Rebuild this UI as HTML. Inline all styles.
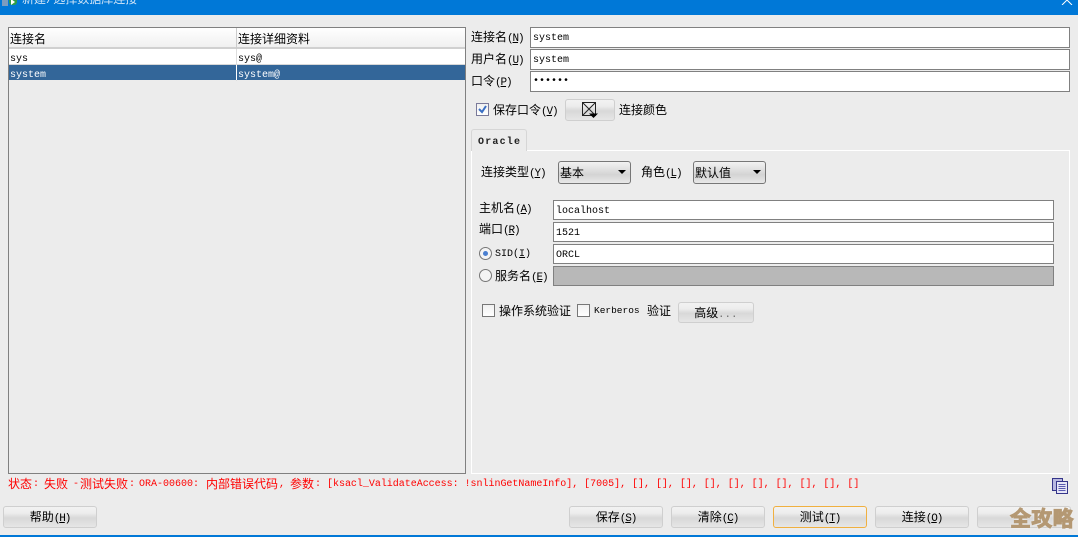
<!DOCTYPE html>
<html>
<head>
<meta charset="utf-8">
<style>
html,body{margin:0;padding:0;}
body{width:1078px;height:537px;overflow:hidden;background:#ececec;position:relative;font-family:"Liberation Mono","WenQuanYi Zen Hei","Noto Sans CJK SC",monospace;color:#000;}
div{position:absolute;box-sizing:border-box;}
.t{font-size:12px;line-height:14px;white-space:nowrap;}
.m{font-size:10px;line-height:14px;white-space:nowrap;}
.f{background:#fff;border:1px solid #808080;border-top-width:1.5px;font-size:10px;line-height:22px;padding-left:2px;white-space:nowrap;}
.b{background:linear-gradient(#f2f2f2 0%,#ededed 30%,#d8d8d8 55%,#e6e6e6 100%);border:1px solid #cfcfcf;border-radius:3px;font-size:12px;line-height:22px;text-align:center;white-space:nowrap;}
.c{background:linear-gradient(#f0f0f0,#fff);border:1px solid #777;width:13px;height:13px;}
.p{font-size:11px;letter-spacing:-1.100px;}
.u{text-decoration:underline;}
.s{background:linear-gradient(#f2f2f2,#d4d4d4 60%,#e8e8e8);border:1px solid #777;border-radius:3px;font-size:12px;line-height:24px;padding-left:1px;white-space:nowrap;}
.s:after{content:"";position:absolute;right:4px;top:8px;border:4.500px solid transparent;border-top:4.500px solid #000;}
.r{border:1px solid #777;border-radius:50%;width:13px;height:13px;background:#f4f4f4;}
.e{color:#f00;top:478px;}
</style>
</head>
<body>
<div style="left:0;top:0;width:1078px;height:15px;background:#0078d7;"></div>
<div style="left:2px;top:-3px;width:6px;height:9px;background:#7a9cc0;"></div>
<div style="left:9px;top:-3px;width:8px;height:8px;background:#2f9e44;border-radius:0 0 3px 3px;"></div>
<div style="left:11px;top:-1px;width:0;height:0;border-left:4px solid #fff;border-top:3px solid transparent;border-bottom:3px solid transparent;"></div>
<div class="t" style="left:22px;top:-7px;color:#cfe4f7;">新建/选择数据库连接</div>
<svg style="position:absolute;left:1061px;top:0" width="12" height="5"><path d="M1 5L6 0L11 5" stroke="#fff" stroke-width="1" fill="none"/></svg>

<!-- table -->
<div style="left:8px;top:27px;width:458px;height:447px;border:1px solid #808080;background:#ececec;"></div>
<div style="left:9px;top:28px;width:456px;height:21px;background:linear-gradient(#fff,#f0f0f0);border-bottom:2px solid #d0d0d0;"></div>
<div style="left:236px;top:28px;width:1px;height:21px;background:#ccc;"></div>
<div class="t" style="left:10px;top:33px;">连接名</div>
<div class="t" style="left:238px;top:33px;">连接详细资料</div>
<div style="left:9px;top:49px;width:456px;height:16px;background:#fff;border-bottom:1px solid #d8d8d8;"></div>
<div style="left:236px;top:49px;width:1px;height:32px;background:#ddd;"></div>
<div class="m" style="left:10px;top:53px;">sys</div>
<div class="m" style="left:238px;top:53px;">sys@</div>
<div style="left:9px;top:65px;width:456px;height:15px;background:#336699;"></div>
<div style="left:236px;top:65px;width:1px;height:15px;background:#fff;"></div>
<div class="m" style="left:10px;top:69px;color:#fff;">system</div>
<div class="m" style="left:238px;top:69px;color:#fff;">system@</div>

<!-- top fields -->
<div class="t" style="left:471px;top:31px;">连接名<span class="p">(<span class="u">N</span>)</span></div>
<div class="t" style="left:471px;top:53px;">用户名<span class="p">(<span class="u">U</span>)</span></div>
<div class="t" style="left:471px;top:75px;">口令<span class="p">(<span class="u">P</span>)</span></div>
<div class="f" style="left:530px;top:27px;width:540px;height:21px;">system</div>
<div class="f" style="left:530px;top:49px;width:540px;height:21px;">system</div>
<div class="f" style="left:530px;top:71px;width:540px;height:21px;line-height:20px;">••••••</div>

<div class="c" style="left:476px;top:103px;border-color:#7a7a9a;"></div>
<svg style="position:absolute;left:476px;top:103px" width="13" height="13"><path d="M3 6L6 9L10 3" stroke="#3a6fc4" stroke-width="2" fill="none"/></svg>
<div class="t" style="left:493px;top:104px;">保存口令<span class="p">(<span class="u">V</span>)</span></div>
<div class="b" style="left:565px;top:99px;width:50px;height:22px;"></div>
<svg style="position:absolute;left:581px;top:101px" width="20" height="20"><path d="M1.500 1.500H14.500V14.500H1.500ZM1.500 1.500L14.500 14.500M14.500 1.500L1.500 14.500" stroke="#222" fill="none"/><path d="M8 12.500H17L12.500 17Z" fill="#000"/></svg>
<div class="t" style="left:619px;top:104px;">连接颜色</div>

<!-- tab -->
<div style="left:471px;top:150px;width:599px;height:324px;border:1px solid #fff;"></div>
<div style="left:471px;top:129px;width:56px;height:22px;background:#ececec;border:1px solid #d6d6d6;border-bottom:none;border-radius:3px 3px 0 0;"></div>
<div class="m" style="left:478px;top:136px;font-weight:bold;color:#222;letter-spacing:1.200px;">Oracle</div>

<div class="t" style="left:481px;top:166px;">连接类型<span class="p">(<span class="u">Y</span>)</span></div>
<div class="s" style="left:558px;top:161px;width:73px;height:23px;">基本</div>
<div class="t" style="left:641px;top:166px;">角色<span class="p">(<span class="u">L</span>)</span></div>
<div class="s" style="left:693px;top:161px;width:73px;height:23px;">默认值</div>

<div class="t" style="left:479px;top:202px;">主机名<span class="p">(<span class="u">A</span>)</span></div>
<div class="t" style="left:479px;top:223px;">端口<span class="p">(<span class="u">R</span>)</span></div>
<div class="f" style="left:553px;top:200px;width:501px;height:20px;">localhost</div>
<div class="f" style="left:553px;top:222px;width:501px;height:20px;">1521</div>
<div class="f" style="left:553px;top:244px;width:501px;height:20px;">ORCL</div>
<div class="f" style="left:553px;top:266px;width:501px;height:20px;background:#b8b8b8;"></div>
<div class="r" style="left:479px;top:247px;"></div>
<div style="left:483px;top:251px;width:5px;height:5px;border-radius:50%;background:#4a7fd0;"></div>
<div class="m" style="left:495px;top:248px;">SID(<span class="u">I</span>)</div>
<div class="r" style="left:479px;top:269px;"></div>
<div class="t" style="left:495px;top:270px;">服务名<span class="p">(<span class="u">E</span>)</span></div>

<div class="c" style="left:482px;top:304px;"></div>
<div class="t" style="left:499px;top:305px;">操作系统验证</div>
<div class="c" style="left:577px;top:304px;"></div>
<div class="m" style="left:594px;top:304px;font-size:9.500px;">Kerberos</div>
<div class="t" style="left:647px;top:305px;">验证</div>
<div class="b" style="left:678px;top:302px;width:76px;height:21px;">高级<span style="color:#666;font-size:10px;letter-spacing:.5px">...</span></div>

<!-- status -->
<div class="t e" style="left:8px;">状态</div>
<div class="m e" style="left:33px;">:</div>
<div class="t e" style="left:44px;">失败</div>
<div class="m e" style="left:73px;">-</div>
<div class="t e" style="left:80px;">测试失败</div>
<div class="m e" style="left:129px;">:</div>
<div class="m e" style="left:139px;top:478px;">ORA-00600:</div>
<div class="t e" style="left:206px;">内部错误代码</div>
<div class="m e" style="left:279px;">,</div>
<div class="t e" style="left:290px;">参数</div>
<div class="m e" style="left:315px;">:</div>
<div class="m e" style="left:327px;letter-spacing:-.02px;">[ksacl_ValidateAccess: !snlinGetNameInfo], [7005], [], [], [], [], [], [], [], [], [], []</div>
<svg style="position:absolute;left:1051px;top:477px" width="18" height="18"><rect x="1.500" y="1.500" width="10" height="12" fill="#b8b8e0" stroke="#35358a"/><rect x="5.500" y="4.500" width="11" height="12" fill="#e6e6f6" stroke="#35358a"/><path d="M7.500 7.500H14.500M7.500 9.500H14.500M7.500 11.500H14.500M7.500 13.500H14.500" stroke="#5a5ab0"/></svg>

<!-- buttons -->
<div class="b" style="left:3px;top:506px;width:94px;height:22px;">帮助<span class="p">(<span class="u">H</span>)</span></div>
<div class="b" style="left:569px;top:506px;width:94px;height:22px;">保存<span class="p">(<span class="u">S</span>)</span></div>
<div class="b" style="left:671px;top:506px;width:94px;height:22px;">清除<span class="p">(<span class="u">C</span>)</span></div>
<div class="b" style="left:773px;top:506px;width:94px;height:22px;border-color:#f0b040;">测试<span class="p">(<span class="u">T</span>)</span></div>
<div class="b" style="left:875px;top:506px;width:94px;height:22px;">连接<span class="p">(<span class="u">O</span>)</span></div>
<div class="b" style="left:977px;top:506px;width:94px;height:22px;"></div>

<div style="left:0;top:535px;width:1078px;height:2px;background:#0078d7;"></div>
<div style="left:1010px;top:505px;font-family:'WenQuanYi Zen Hei','Noto Sans CJK SC',sans-serif;font-weight:bold;font-size:21px;line-height:26px;color:#b49873;white-space:nowrap;letter-spacing:.3px;-webkit-text-stroke:1px #b49873;text-shadow:0 0 2px #fff;">全攻略</div>
</body>
</html>
